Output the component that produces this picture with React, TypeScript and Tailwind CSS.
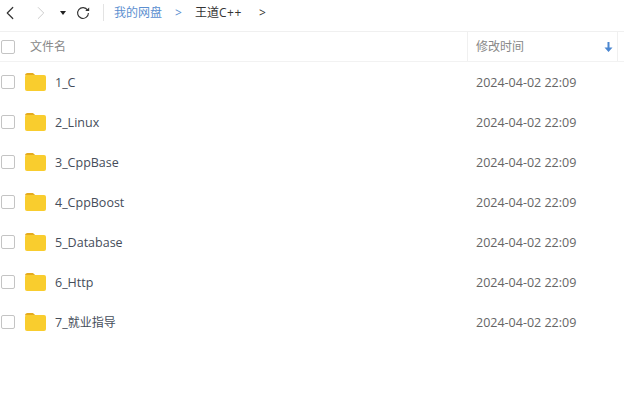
import { ChevronLeft, ChevronRight } from 'lucide-react';

const FILES = [
  { prefix: '1_C' },
  { prefix: '2_Linux' },
  { prefix: '3_CppBase' },
  { prefix: '4_CppBoost' },
  { prefix: '5_Database' },
  { prefix: '6_Http' },
  { prefix: '7_', cjk: '就业指导' },
];

function Checkbox() {
  return <span className="block h-[14px] w-[14px] shrink-0 rounded-[2px] border border-[#c4c4c4] bg-white" />;
}

function Folder() {
  return (
    <svg width="21" height="18" viewBox="0 0 21 18" className="shrink-0">
      <path d="M0 2.5C0 1 1 0 2.5 0H7c1 0 1.6.4 2.2 1.1L10.4 2.4H2.5z" fill="#e5ab1e" />
      <rect x="0" y="2" width="21" height="16" rx="2" fill="#f9cd2e" />
    </svg>
  );
}

export default function App() {
  return (
    <div className="h-[400px] w-[624px] overflow-hidden bg-white font-['Open_Sans','Noto_Sans_CJK_SC',sans-serif] text-[12.5px] text-[#454d5a]">
      <div className="flex h-[32px] items-center border-b border-[#f0f0f0] pb-[6px] text-[12px]">
        <ChevronLeft size={22} strokeWidth={1.3} className="-ml-[1px] text-[#333]" />
        <ChevronRight size={22} strokeWidth={1} className="ml-[9px] text-[#c8c8c8]" />
        <span className="ml-[8px] h-0 w-0 border-x-[3.5px] border-t-[4px] border-x-transparent border-t-[#222]" />
        <svg width="14" height="14" viewBox="0 0 14 14" fill="none" className="ml-[10px]">
          <path d="M11.6 4.2A5.4 5.4 0 1 0 12.4 7" stroke="#333" strokeWidth="1.1" />
          <path d="M9.2 5h4V1.5z" fill="#333" />
        </svg>
        <span className="ml-[13px] h-[17px] w-px bg-[#e3e3e3]" />
        <span className="ml-[10px] text-[#5b8fd0]">我的网盘</span>
        <span className="ml-[13px] text-[#5b8fd0]">&gt;</span>
        <span className="ml-[13px] text-[#333]">
          王道<span className="tracking-[0.6px]">C++</span>
        </span>
        <span className="ml-[14px] pl-[3px] text-[#333]">&gt;</span>
      </div>
      <div className="flex h-[30px] items-center border-b border-[#f2f2f2] text-[12px]">
        <span className="ml-px"><Checkbox /></span>
        <span className="ml-[15px] text-[#888]">文件名</span>
        <div className="ml-auto mr-[6px] flex h-full w-[151px] items-center border-x border-[#f0f0f0] pl-[8px] text-[#888]">
          <span>修改时间</span>
          <svg width="9" height="10" viewBox="0 0 9 10" className="ml-auto mr-[4px]">
            <path d="M3.5 0h2v5.5H8.5L4.5 10 .5 5.5h3z" fill="#4a86d0" />
          </svg>
        </div>
      </div>
      <div>
        {FILES.map((f) => (
          <div key={f.prefix} className="flex h-[40px] items-center">
            <span className="ml-px"><Checkbox /></span>
            <span className="ml-[10px]"><Folder /></span>
            <span className="ml-[9px] pt-[2px] text-[#454d5a]">
              {f.prefix}
              {f.cjk && <span className="text-[12px]">{f.cjk}</span>}
            </span>
            <span className="ml-auto w-[148px] pt-[2px] text-[#666]">2024-04-02 22:09</span>
          </div>
        ))}
      </div>
    </div>
  );
}
